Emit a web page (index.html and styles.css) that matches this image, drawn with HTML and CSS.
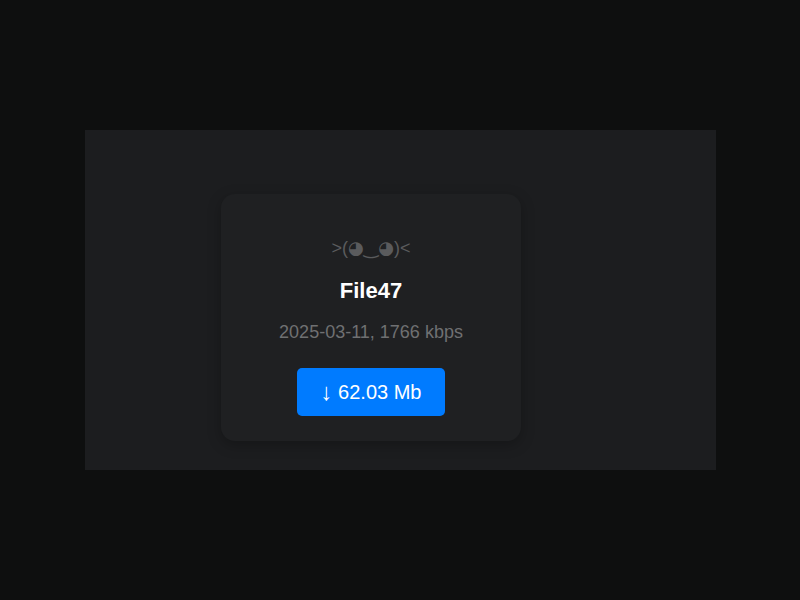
FILE: index.html
```html
<!DOCTYPE html>
<html lang="en">
<head>
<meta charset="UTF-8">
<meta name="viewport" content="width=device-width, initial-scale=1.0">
<title>File47</title>
<link rel="stylesheet" href="styles.css">
</head>
<body>
    <div class="panel">
        <div class="card">
            <div class="face">&gt;(<span class="eye">◕‿◕</span>)&lt;</div>
            <h2 class="title">File47</h2>
            <p class="meta">2025-03-11, 1766 kbps</p>
            <button class="btn"><span class="arrow">↓</span> 62.03 Mb</button>
        </div>
    </div>
</body>
</html>
```

FILE: styles.css
```css
body {
    font-family: "Liberation Sans", Arial, sans-serif;
    background-color: #0e0f0f;
    margin: 0;
    padding: 130px 0 0 85px;
}
.panel {
    width: 631px;
    height: 340px;
    box-sizing: border-box;
    background-color: #1c1d1f;
    padding: 64px 0 0 136px;
}
.card {
    width: 300px;
    height: 247px;
    box-sizing: border-box;
    background-color: #1f2022;
    border-radius: 14px;
    box-shadow: 0 4px 14px rgba(0, 0, 0, 0.25);
    padding: 42px 20px 0;
    text-align: center;
}
.face {
    color: #5a5b5d;
    font-size: 18px;
    line-height: 24px;
}
.eye {
    font-family: "DejaVu Sans", sans-serif;
}
.title {
    color: #ffffff;
    font-size: 22px;
    font-weight: bold;
    line-height: 26px;
    margin: 18px 0 0;
}
.meta {
    color: #6f7072;
    font-size: 18px;
    line-height: 22px;
    margin: 17px 0 0;
}
.btn {
    background-color: #007bff;
    color: #ffffff;
    font-family: inherit;
    font-size: 20px;
    width: 148px;
    height: 48px;
    border: none;
    border-radius: 5px;
    margin-top: 25px;
    cursor: pointer;
}
.arrow {
    font-family: "Noto Sans", sans-serif;
    font-size: 24px;
    line-height: 20px;
    vertical-align: -1px;
}
```
